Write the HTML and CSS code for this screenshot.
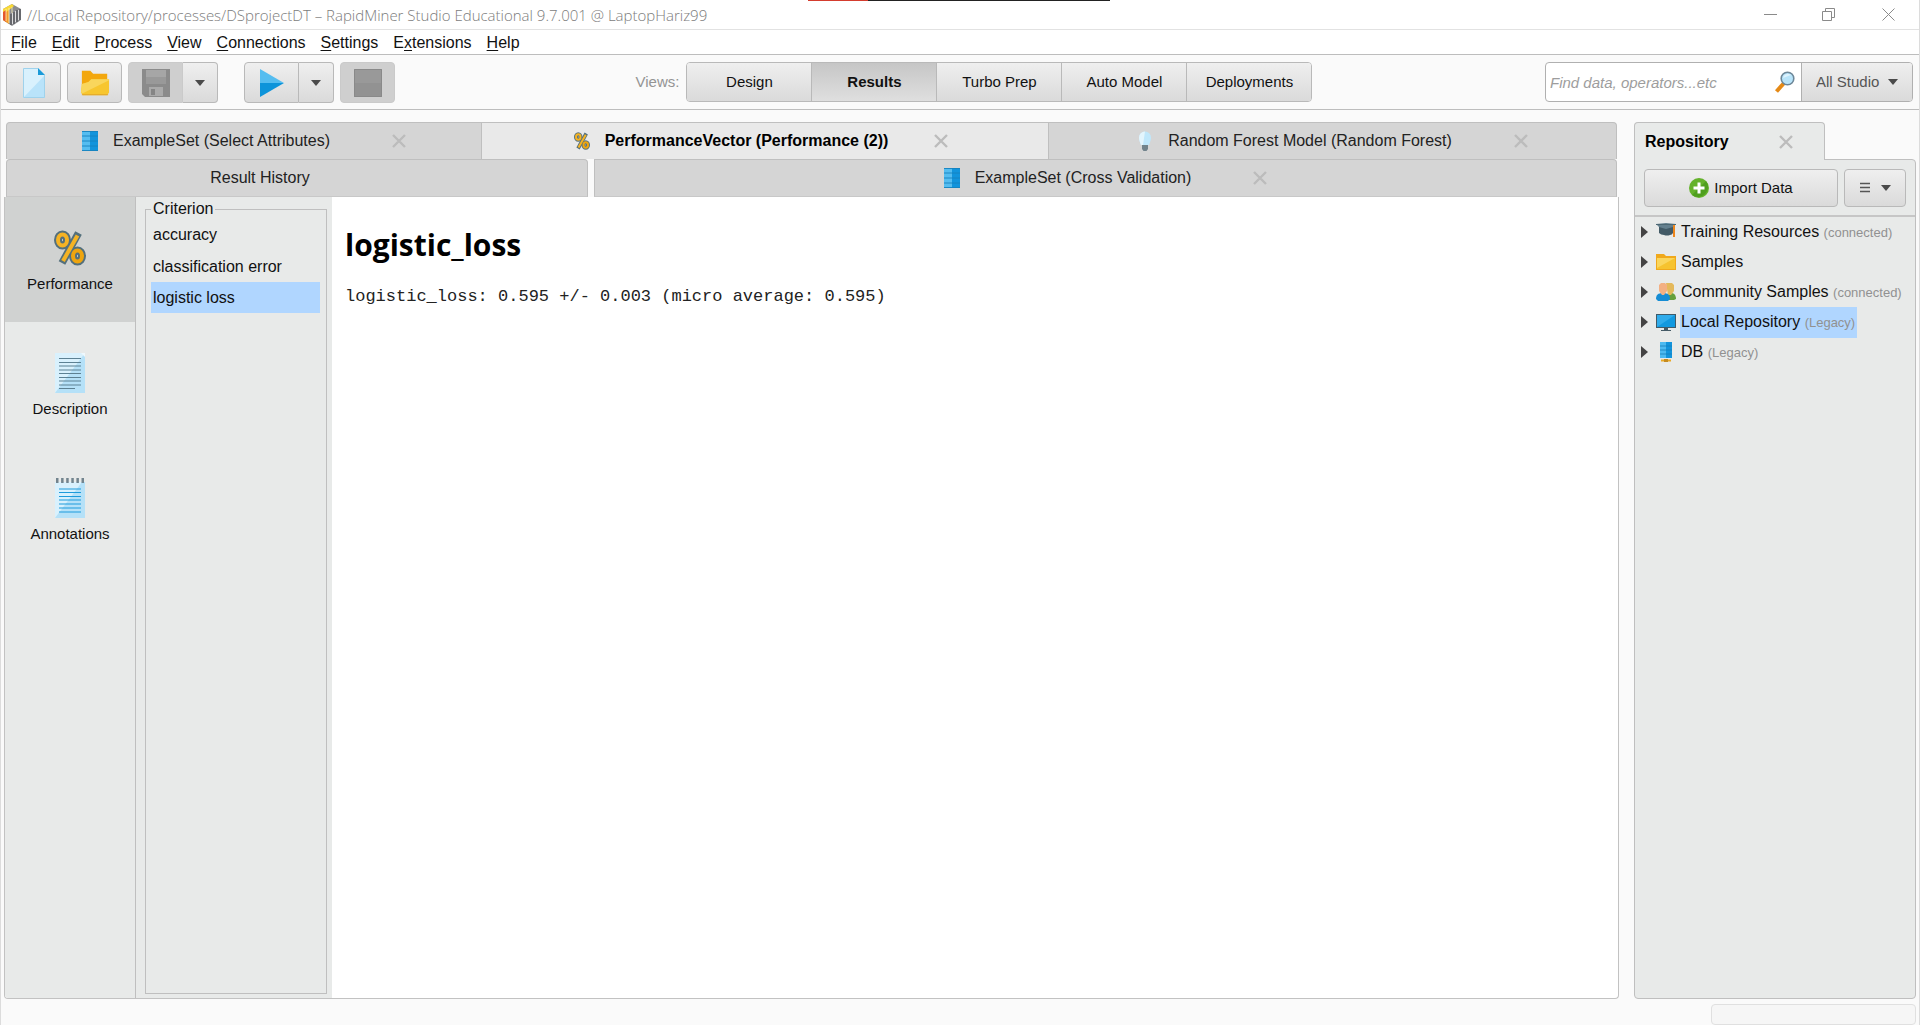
FILE: index.html
```html
<!DOCTYPE html>
<html lang="en">
<head>
<meta charset="utf-8">
<title>RapidMiner Studio Educational</title>
<link rel="stylesheet" href="styles.css">
</head>
<body>
<svg class="defs" aria-hidden="true">
  <symbol id="i-close" viewBox="0 0 14 14"><path d="M1 1l12 12M13 1L1 13" stroke="#bcbcbc" stroke-width="2.4" fill="none"/></symbol>
  <symbol id="i-down" viewBox="0 0 10 8"><path d="M0 1h10L5 7z" fill="#4a4a4a"/></symbol>
  <symbol id="i-right" viewBox="0 0 7 12"><path d="M0 0l7 6-7 6z" fill="#444"/></symbol>
  <symbol id="i-table" viewBox="0 0 16 20"><path d="M0 0h16v20H0z" fill="#1294dc"/><path d="M0 0h8v20H0z" fill="#55bdf0"/><path d="M0 .5h16M0 5h16M0 10h16M0 15h16M0 19.5h16" stroke="#1682bd" stroke-width=".9"/></symbol>
  <symbol id="i-percent" viewBox="0 0 32 36"><g fill="none" stroke="#54707c" stroke-width="8"><ellipse cx="8.500" cy="10" rx="4.500" ry="5.500"/><ellipse cx="23.500" cy="26" rx="4.500" ry="5.500"/><path d="M24.500 3L8 33" stroke-width="7.500"/></g><g fill="none" stroke="#f5b324" stroke-width="4"><ellipse cx="8.500" cy="10" rx="4.500" ry="5.500"/><path d="M23.500 5.500L9 31"/></g><ellipse cx="23.500" cy="26" rx="4.500" ry="5.500" fill="none" stroke="#eea50f" stroke-width="4"/></symbol>
  <symbol id="i-sheet" viewBox="0 0 30 40"><path d="M0 0h30v40H0z" fill="#d9f1fd"/><path d="M30 0v40H0z" fill="#b5e1f8"/><path d="M0 0h26l4 0v4L26 0z" fill="#eff9fe"/></symbol>
</svg>

<header class="titlebar">
  <svg class="logo" viewBox="0 0 20 22"><path d="M10 0l9 5v11l-9 6-9-6V5z" fill="#8b8c90"/><path d="M10 0L1 5v11l3 2v-6l3-2V6l5-4z" fill="#f9d936"/><path d="M1 8l3-2v12l-3-2z" fill="#e4572c"/><path d="M4 8l3-2v14l-3-2z" fill="#f39a2b"/><path d="M4 5v12M7 4v15M10 3v6" stroke="#fff3b8" stroke-width=".8" fill="none"/><path d="M9 10v11M12 8v12M15 6v12M18 5v11" stroke="#55565b" stroke-width="1.300" fill="none"/><path d="M10.500 9v11M13.500 7v11M16.500 6v10" stroke="#e8e8e8" stroke-width=".9"/></svg>
  <h1 class="title">//Local Repository/processes/DSprojectDT – RapidMiner Studio Educational 9.7.001 @ LaptopHariz99</h1>
  <div class="capture-strip"></div>
  <div class="window-controls">
    <button aria-label="Minimize"><svg viewBox="0 0 13 13"><path d="M0 6.500h13"/></svg></button>
    <button aria-label="Restore"><svg viewBox="0 0 13 13"><path d="M.5 3.500h9v9h-9zM3.500 3V.5h9v9H10"/></svg></button>
    <button aria-label="Close"><svg viewBox="0 0 13 13"><path d="M.5.5l12 12M12.500.5l-12 12"/></svg></button>
  </div>
</header>

<nav class="menubar">
  <button><u>F</u>ile</button><button><u>E</u>dit</button><button><u>P</u>rocess</button><button><u>V</u>iew</button><button><u>C</u>onnections</button><button><u>S</u>ettings</button><button>E<u>x</u>tensions</button><button><u>H</u>elp</button>
</nav>

<div class="toolbar">
  <div class="actions">
    <button class="btn" aria-label="New"><svg width="22" height="30" viewBox="0 0 22 30"><path d="M0 0h15l7 7v23H0z" fill="#d9f1fd"/><path d="M22 7v23H0z" fill="#b9e3fa"/><path d="M15 0l7 7h-7z" fill="#1b9ad8"/><path d="M.5 29.500V.5H15M21.500 7v22.500H.5" fill="none" stroke="#9fd2ec"/></svg></button>
    <button class="btn" aria-label="Open"><svg width="30" height="26" viewBox="0 0 32 26"><path d="M2 0h9l3 3h15v12H2z" fill="#f3a70d"/><path d="M2 14l7-2 3-3h19v14l-2 3H3l-2-3z" fill="#f7c62f"/><path d="M2 14l7-2 3-3h19v1L3 24l-2-1z" fill="#f9d65c"/><path d="M2 25.500h28" stroke="#dfa32c"/></svg></button>
    <div class="split">
      <button class="btn off" aria-label="Save"><svg width="28" height="28" viewBox="0 0 28 28"><path d="M0 0h28v28H3l-3-3z" fill="#8b8b8b"/><path d="M4 1h20v14H4z" fill="#a6a6a6"/><path d="M4 8h20v7H4z" fill="#999"/><path d="M7 18h14v9H7z" fill="#aaa"/><path d="M9 20h4v6H9z" fill="#858585"/></svg></button>
      <button class="btn drop" aria-label="Save options"><svg><use href="#i-down"/></svg></button>
    </div>
    <div class="split run">
      <button class="btn" aria-label="Run"><svg width="24" height="28" viewBox="0 0 24 28"><path d="M0 0l24 14H0z" fill="#55bdf0"/><path d="M0 14h24L0 28z" fill="#0d94da"/></svg></button>
      <button class="btn drop" aria-label="Run options"><svg><use href="#i-down"/></svg></button>
    </div>
    <button class="btn off" aria-label="Stop"><svg width="28" height="28" viewBox="0 0 28 28"><path d="M0 0h28v28H0z" fill="#999"/><path d="M0 14h28v14H0z" fill="#929292"/><path d="M.5.5h27v27H.5z" fill="none" stroke="#898989"/></svg></button>
  </div>
  <div class="views">
    <span class="views-label">Views:</span>
    <div class="view-group">
      <button>Design</button><button class="active">Results</button><button>Turbo Prep</button><button>Auto Model</button><button>Deployments</button>
    </div>
  </div>
  <div class="search">
    <input type="text" aria-label="Search" placeholder="Find data, operators...etc">
    <button class="find" aria-label="Find"><svg width="20" height="22" viewBox="0 0 20 22"><path d="M1.500 20.500l8-9" stroke="#e58a17" stroke-width="4"/><circle cx="12.500" cy="7.500" r="6.300" fill="#b8e4fa" stroke="#6d8798" stroke-width="1.600"/><path d="M8 7a5 5 0 018-3z" fill="#def3fd"/></svg></button>
    <div class="scope">
      <select aria-label="Search scope"><option>All Studio</option></select>
      <svg class="scope-arrow"><use href="#i-down"/></svg>
    </div>
  </div>
</div>

<main class="workspace">
  <section class="results">
    <div class="tabs first">
      <div class="tab"><svg class="ticon"><use href="#i-table"/></svg><button>ExampleSet (Select Attributes)</button><button class="x" aria-label="Close tab"><svg><use href="#i-close"/></svg></button></div>
      <div class="tab active"><svg class="ticon"><use href="#i-percent"/></svg><button>PerformanceVector (Performance (2))</button><button class="x" aria-label="Close tab"><svg><use href="#i-close"/></svg></button></div>
      <div class="tab"><svg class="ticon" viewBox="0 0 16 20"><path d="M4 14C3 11 2 9.500 2 6.500a6 6 0 0112 0c0 3-1 4.500-2 7.500z" fill="#bfe7fb"/><path d="M8 .5a6 6 0 00-6 6c0 3 1 4.500 2 7.500h2z" fill="#e3f5fd"/><path d="M5 14h6v4l-1.500 2h-3L5 18z" fill="#71838c"/></svg><button>Random Forest Model (Random Forest)</button><button class="x" aria-label="Close tab"><svg><use href="#i-close"/></svg></button></div>
    </div>
    <div class="tabs second">
      <div class="tab history"><button>Result History</button></div>
      <div class="tab"><svg class="ticon"><use href="#i-table"/></svg><button>ExampleSet (Cross Validation)</button><button class="x" aria-label="Close tab"><svg><use href="#i-close"/></svg></button></div>
    </div>
    <div class="panel">
      <nav class="side">
        <button class="active"><svg width="32" height="36"><use href="#i-percent"/></svg>Performance</button>
        <button><svg width="30" height="40" viewBox="0 0 30 40"><use href="#i-sheet"/><path d="M4 5.500h22M4 9.500h22M4 13h22M4 17h22M4 20.500h22M4 24.500h22M4 28h22M4 32h22M4 35.500h16" stroke="#5d8193" stroke-width="1.200"/></svg>Description</button>
        <button><svg width="30" height="40" viewBox="0 0 30 40"><use href="#i-sheet"/><path d="M0 0h30v4H0z" fill="#e8eae9"/><path d="M1 2.500h28" stroke="#72848e" stroke-width="5" stroke-dasharray="2.500 2.600"/><path d="M4 11h22M4 14.500h22M4 18.500h22M4 22h22M4 26h22M4 30h22M4 34h22" stroke="#1e9bdb" stroke-width="1.200"/></svg>Annotations</button>
      </nav>
      <div class="criteria">
        <fieldset>
          <legend>Criterion</legend>
          <button>accuracy</button>
          <button>classification error</button>
          <button class="active">logistic loss</button>
        </fieldset>
      </div>
      <article class="output">
        <h2>logistic_loss</h2>
        <p>logistic_loss: 0.595 +/- 0.003 (micro average: 0.595)</p>
      </article>
    </div>
  </section>

  <aside class="repository">
    <div class="repo-tab"><button>Repository</button><button class="x" aria-label="Close repository"><svg><use href="#i-close"/></svg></button></div>
    <div class="repo-panel">
      <div class="repo-tools">
        <button class="btn import"><svg width="20" height="20" viewBox="0 0 20 20"><circle cx="10" cy="10" r="10" fill="#64b22b"/><path d="M17 3A10 10 0 013 17z" fill="#4f9f1e"/><path d="M10 4.500v11M4.500 10h11" stroke="#fff" stroke-width="3"/></svg>Import Data</button>
        <button class="btn options" aria-label="Repository options"><svg width="10" height="12" viewBox="0 0 10 12"><path d="M0 1.500h10M0 5.500h10M0 9.500h10" stroke="#555" stroke-width="1.500"/></svg><svg class="arrow"><use href="#i-down"/></svg></button>
      </div>
      <ul class="tree">
        <li><button aria-label="Expand"><svg><use href="#i-right"/></svg></button><svg class="nicon" viewBox="0 0 20 20"><path d="M3 5h14v6q-1 2-3 2-3 1-6 0-3 0-5-2z" fill="#425a66"/><path d="M0 2l10-1 10 1-3 3-7 2-7-2z" fill="#64808e"/><path d="M0 2.500h20" stroke="#4d6874"/><path d="M18 3v7M18 10v5" stroke="#ee861b" stroke-width="2"/></svg><span>Training Resources <small>(connected)</small></span></li>
        <li><button aria-label="Expand"><svg><use href="#i-right"/></svg></button><svg class="nicon" viewBox="0 0 20 20"><path d="M0 2h8l2 2h10v14H0z" fill="#f0a91c"/><path d="M1 6h18v11H1z" fill="#f6c32f"/><path d="M1 6h18L1 16z" fill="#fad65d"/></svg><span>Samples</span></li>
        <li><button aria-label="Expand"><svg><use href="#i-right"/></svg></button><svg class="nicon" viewBox="0 0 20 20"><path d="M9 18c0-6 3-7 6-7s5 2 5 6l-2 1z" fill="#659f3c"/><path d="M10 1h6l2 2v6l-3 4h-3z" fill="#e4b95b"/><path d="M0 17c0-4 2-6 7-6s7 2 7 6l-2 2H2z" fill="#168dd4"/><path d="M3 3l2-2h4l2 2v6l-3 4H6L3 9z" fill="#f3b083"/></svg><span>Community Samples <small>(connected)</small></span></li>
        <li class="selected"><button aria-label="Expand"><svg><use href="#i-right"/></svg></button><svg class="nicon" viewBox="0 0 20 20"><path d="M0 2h20v14H0z" fill="#405b69"/><path d="M1 3h18v12H1z" fill="#1299df"/><path d="M1 3h18L1 15z" fill="#30aceb"/><path d="M8 16h4v2h3v1H5v-1h3z" fill="#455b66"/></svg><span>Local Repository <small>(Legacy)</small></span></li>
        <li><button aria-label="Expand"><svg><use href="#i-right"/></svg></button><svg class="nicon" viewBox="0 0 20 20"><path d="M4 0h12v16H4z" fill="#1294dc"/><path d="M4 0h6v16H4z" fill="#4dbaf0"/><path d="M4 4h12M4 8h12M4 12h12" stroke="#167eb8" stroke-width=".8"/><path d="M5 18.500h10" stroke="#eaa823" stroke-width="2"/><path d="M8 17h4v3H8z" fill="#c48b20"/></svg><span>DB <small>(Legacy)</small></span></li>
      </ul>
    </div>
  </aside>
</main>

<footer class="statusbar"><div class="progress"></div></footer>
</body>
</html>
```
FILE: styles.css
```css
* { box-sizing: border-box; }

body {
  margin: 0;
  min-height: 100vh;
  display: flex;
  flex-direction: column;
  background: #fafafa;
  border-left: 1px solid #dcdcdc;
  border-right: 1px solid #dcdcdc;
  color: #111;
  font: 16px/20px "Liberation Sans", Arial, sans-serif;
}

button, input, select {
  margin: 0;
  padding: 0;
  border: 0;
  background: none;
  color: inherit;
  font: inherit;
}

svg { display: block; flex: none; }
.defs { position: absolute; width: 0; height: 0; }

/* title bar */
.titlebar {
  position: relative;
  display: flex;
  align-items: center;
  height: 30px;
  padding-left: 1px;
  background: #fff;
  border-bottom: 1px solid #e2e2e2;
}
.logo { width: 20px; height: 22px; }
.title {
  margin: 0 auto 0 5px;
  color: #7c7c7c;
  font: 300 15px/20px "Open Sans", "Noto Sans", sans-serif;
}
.capture-strip {
  position: absolute;
  top: 0;
  left: 42.1%;
  width: 15.7%;
  height: 1px;
  background: linear-gradient(90deg, #d43c2e 20%, #222 20%);
}
.window-controls { display: flex; }
.window-controls button {
  width: 58px;
  height: 28px;
  display: grid;
  place-items: center;
}
.window-controls button:last-child { width: 62px; }
.window-controls svg { width: 13px; height: 13px; fill: none; stroke: #8a8a8a; }

/* menu bar */
.menubar {
  display: flex;
  gap: 15px;
  height: 25px;
  padding: 1px 0 0 10px;
  background: #fff;
  border-bottom: 1px solid #bdbdbd;
}
.menubar u { text-underline-offset: 2px; }

/* toolbar */
.toolbar {
  display: grid;
  grid-template-columns: 630fr auto 601fr;
  align-items: start;
  height: 55px;
  padding: 7px 6px 0 5px;
  border-bottom: 1px solid #bdbdbd;
}
.actions { display: flex; gap: 6px; }
.btn {
  display: flex;
  align-items: center;
  justify-content: center;
  width: 55px;
  height: 41px;
  border: 1px solid #b9b9b9;
  border-radius: 4px;
  background: linear-gradient(#efefef, #dadada);
}
.btn.off { background: #cfcfcf; border-color: #cacaca; }
.split { display: flex; }
.split .btn:first-child { border-radius: 4px 0 0 4px; }
.btn.drop { width: 35px; border-left: 0; border-radius: 0 4px 4px 0; }
.drop svg, .arrow, .scope-arrow { width: 10px; height: 8px; }
.run { margin-left: 20px; }

.views { display: flex; align-items: center; gap: 7px; font-size: 15px; }
.views-label { color: #949494; }
.view-group {
  display: flex;
  border: 1px solid #b9b9b9;
  border-radius: 4px;
  overflow: hidden;
}
.view-group button {
  width: 125px;
  height: 38px;
  background: linear-gradient(#efefef, #dadada);
  border-right: 1px solid #b9b9b9;
}
.view-group button:last-child { width: 124px; border-right: 0; }
.view-group .active { background: linear-gradient(#c6c6c6, #dfdfdf); font-weight: 700; }

.search {
  justify-self: end;
  display: flex;
  width: 368px;
  height: 40px;
  border: 1px solid #b0b0b0;
  border-radius: 4px;
  background: #fff;
  overflow: hidden;
  font-size: 15px;
}
.search input { flex: 1; min-width: 0; padding: 2px 4px 0; font-style: italic; outline: 0; }
.search input::placeholder { color: #9d9d9d; opacity: 1; }
.find { width: 28px; padding-left: 2px; }
.scope {
  display: grid;
  grid-template-columns: 1fr;
  align-items: center;
  width: 111px;
  background: linear-gradient(#efefef, #dadada);
  border-left: 1px solid #b0b0b0;
}
.scope select, .scope-arrow { grid-area: 1 / 1; }
.scope select { appearance: none; width: 100%; height: 100%; padding-left: 14px; color: #555; }
.scope-arrow { justify-self: end; margin-right: 14px; pointer-events: none; }

/* workspace */
.workspace {
  flex: 1;
  display: grid;
  grid-template-columns: minmax(0, 1fr) 282px;
  gap: 15px;
  padding: 12px 3px 0;
}
.results { display: flex; flex-direction: column; }
.tabs { display: grid; margin: 0 2px; }
.first { grid-template-columns: 476fr 567fr 568fr; }
.second { grid-template-columns: 582fr 1023fr; gap: 6px; }
.tab {
  display: flex;
  align-items: center;
  justify-content: center;
  height: 37px;
  border: 1px solid #bfbfbf;
  border-bottom: 0;
  background: #d5d5d5;
  color: #222;
}
.second .tab { height: 38px; border-bottom: 1px solid #c8c8c8; }
.first .tab + .tab { border-left: 0; }
.tab:first-child { border-top-left-radius: 4px; }
.tab:last-child { border-top-right-radius: 4px; }
.tab.active { padding-right: 8px; background: #e9e9e9; color: #000; font-weight: 700; }
.tab.history { padding-right: 74px; border-top-right-radius: 4px; }
.ticon { width: 16px; height: 20px; margin-right: 15px; }
.x { margin-left: 62px; }
.tab.active .x { margin-left: 46px; }
.x svg { width: 14px; height: 14px; }

.panel {
  flex: 1;
  display: grid;
  grid-template-columns: 131px 196px minmax(0, 1fr);
  border: 1px solid #c2c2c2;
  border-top: 0;
  border-radius: 0 0 4px 4px;
  background: #fff;
  overflow: hidden;
}
.side { background: #e8eae9; border-right: 1px solid #bfbfbf; font-size: 15px; }
.side button {
  display: flex;
  flex-direction: column;
  align-items: center;
  justify-content: center;
  gap: 6px;
  width: 100%;
  height: 125px;
  padding-top: 2px;
}
.side .active { background: #d0d2d1; gap: 8px; padding-top: 4px; }

.criteria { display: flex; padding: 1px 5px 4px 9px; background: #e8eae9; }
fieldset {
  flex: 1;
  margin: 0;
  padding: 0 6px 0 5px;
  border: 1px solid #bfbfbf;
}
legend { padding: 0 2px; line-height: 22px; }
fieldset button {
  display: block;
  width: 100%;
  height: 31px;
  padding: 1px 2px 0;
  text-align: left;
}
legend + button { padding-bottom: 2px; padding-top: 0; }
fieldset .active { background: #b0d6ff; }

.output { padding: 26px 13px; color: #000; }
.output h2 { margin: 0; font: 700 30px/44px "Open Sans", "Noto Sans", sans-serif; }
.output p { margin: 20px 0 0; color: #222; font: 17px/20px "Liberation Mono", "Courier New", monospace; }

/* repository */
.repository { display: flex; flex-direction: column; }
.repo-tab {
  display: flex;
  align-items: center;
  align-self: flex-start;
  width: 191px;
  height: 38px;
  margin-bottom: -1px;
  padding-left: 10px;
  border: 1px solid #bfbfbf;
  border-bottom: 0;
  border-radius: 4px 4px 0 0;
  background: #e8eae9;
  color: #000;
  font-weight: 700;
  z-index: 1;
}
.repo-tab .x { margin-left: 50px; }
.repo-panel {
  flex: 1;
  border: 1px solid #bfbfbf;
  border-radius: 0 4px 4px 4px;
  background: #e8eae9;
}
.repo-tools {
  display: flex;
  gap: 6px;
  padding: 9px 9px 8px;
  border-bottom: 2px solid #c6c6c6;
}
.repo-tools .btn { height: 38px; }
.repo-tools .import { flex: 1; gap: 5px; font-size: 15px; }
.repo-tools .options { width: 62px; gap: 11px; }

.tree { margin: 0; padding: 0 0 0 6px; list-style: none; }
.tree li { display: flex; align-items: center; height: 30px; }
.tree button svg { width: 7px; height: 12px; }
.nicon { width: 20px; height: 20px; margin-left: 8px; }
.tree span { margin-left: 4px; padding: 0 2px 0 1px; line-height: 30px; white-space: nowrap; }
.tree small { color: #919191; font-size: 13px; }
.selected span { background: #b0d6ff; }

.statusbar { display: flex; justify-content: flex-end; height: 26px; padding: 5px 3px 0; }
.progress { width: 205px; height: 21px; border: 1px solid #e0e0e0; border-radius: 4px; background: #f6f6f6; }
```
